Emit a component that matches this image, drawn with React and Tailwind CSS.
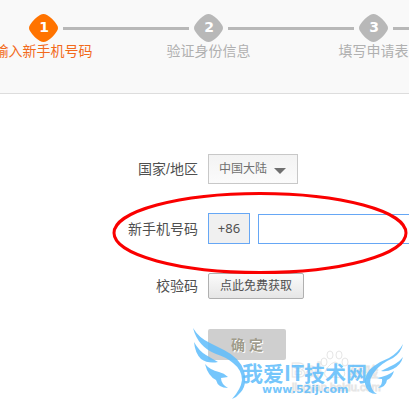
import React, { useState } from "react";

const steps = [
  { id: 1, label: "输入新手机号码" },
  { id: 2, label: "验证身份信息" },
  { id: 3, label: "填写申请表" },
];

const StepMark = ({ number, active }) => (
  <svg
    viewBox="0 0 29 28"
    className={`h-7 w-[29px] shrink-0 ${
      active ? "text-[#ff7300]" : "text-[#b8b8b8]"
    }`}
  >
    <path
      d="M11 1Q14.5-1 18 1Q24 4.500 28 11Q30 14 28 17Q24 23.500 18 27Q14.500 29 11 27Q5 23.500 1 17Q-1 14 1 11Q5 4.500 11 1Z"
      fill="currentColor"
    />
    <text
      x="15"
      y="18"
      textAnchor="middle"
      fill="#fff"
      className="font-['DejaVu_Sans',sans-serif] text-sm font-bold"
    >
      {number}
    </text>
  </svg>
);

const Steps = ({ current }) => (
  <header className="overflow-hidden border-b border-[#dddddd] bg-[#f9f9f9] pt-3.5 pb-8">
    <ol className="-ml-[39px] flex">
      {steps.map(({ id, label }) => (
        <li key={id} className="w-[165px] shrink-0">
          <div className="flex items-center gap-[5px]">
            <span
              className={`h-[3px] flex-1 ${id === 1 ? "" : "bg-[#b8b8b8]"}`}
            />
            <StepMark number={id} active={id === current} />
            <span className="h-[3px] flex-1 bg-[#b8b8b8]" />
          </div>
          <p
            className={`text-center text-sm leading-[19px] ${
              id === current ? "text-[#f26a1b]" : "text-[#b0b0b0]"
            }`}
          >
            {label}
          </p>
        </li>
      ))}
    </ol>
  </header>
);

const Highlight = () => (
  <svg
    viewBox="0 0 296 82"
    className="pointer-events-none absolute top-[192px] left-[112px] h-[82px] w-[296px]"
    fill="none"
  >
    <ellipse
      cx="148"
      cy="41"
      rx="146"
      ry="39.500"
      stroke="#fa0000"
      strokeWidth="3"
    />
  </svg>
);

const Watermark = () => (
  <svg
    viewBox="0 0 219 80"
    className="pointer-events-none absolute top-[324px] left-[190px] h-20 w-[219px]"
  >
    <g fill="#fff" fillOpacity="0.600" stroke="#e6e6e6">
      <ellipse cx="134" cy="38" rx="3" ry="4" />
      <ellipse cx="140" cy="31" rx="3" ry="4" />
      <ellipse cx="149" cy="31" rx="3" ry="4" />
      <ellipse cx="155" cy="38" rx="3" ry="4" />
      <path d="M145 38Q149 39 151 43Q158 50 152 54Q145 52 138 54Q131 51 138 43Q141 39 145 38Z" />
      <text
        x="101"
        y="53"
        className="font-['Liberation_Sans',sans-serif] text-xl font-bold"
      >
        Bai
      </text>
      <text
        x="160"
        y="53"
        className="font-['Noto_Sans_CJK_SC',sans-serif] text-sm"
      >
        经验
      </text>
      <text
        x="102"
        y="67"
        className="font-['Liberation_Sans',sans-serif] text-[11px]"
      >
        jingyan.baidu.com
      </text>
    </g>
    <g fill="#5dbcfb" fillOpacity="0.850">
      <path d="M3 4Q9 14 20 19L34 26Q50 34 54 47Q58 62 49 70Q46 74 42 75Q51 65 52 56Q52 46 43 39Q36 33 26 30Q8 23 3 4Z" />
      <path d="M4 18Q9 27 16 31Q21 34 28 38Q18 40 11 35Q5 29 4 18Z" />
      <path d="M15 40Q20 46 29 48Q34 49 38 53L31 54Q31 60 38 64Q28 64 26 56Q18 52 15 40Z" />
      <path d="M213 20Q211 29 203 34Q192 39 186 46Q178 55 181 62Q182 67 187 70Q177 70 175 60Q174 49 184 42Q191 37 199 34Q208 29 213 20Z" />
      <path d="M213 33Q211 41 203 45Q197 48 191 47Q201 42 205 40Q210 37 213 33Z" />
      <path d="M204 47Q202 54 197 56Q196 63 188 64Q193 60 192 55Q189 55 187 54Q198 52 204 47Z" />
      <text
        x="52"
        y="57"
        className="font-['Noto_Sans_CJK_SC',sans-serif] text-[21px] font-bold"
      >
        我爱IT技术网
      </text>
      <text
        x="72"
        y="69"
        className="font-['DejaVu_Sans',sans-serif] text-[11px] font-bold"
      >
        www.52ij.com
      </text>
    </g>
  </svg>
);

const App = () => {
  const [formData, setFormData] = useState({ region: "cn", phone: "" });

  const handleChange = (e) => {
    const { name, value } = e.target;
    setFormData({ ...formData, [name]: value });
  };

  const handleSubmit = (e) => {
    e.preventDefault();
  };

  return (
    <div className="relative min-h-screen overflow-hidden bg-white font-['Liberation_Sans','Noto_Sans_CJK_SC',sans-serif] text-[#505050]">
      <Steps current={1} />
      <form className="pt-[60px]" onSubmit={handleSubmit}>
        <div className="flex items-center gap-2.5">
          <label htmlFor="region" className="w-[198px] text-right text-sm">
            国家/地区
          </label>
          <div className="relative">
            <select
              id="region"
              name="region"
              value={formData.region}
              onChange={handleChange}
              className="h-[30px] w-[90px] appearance-none border border-[#c8c8c8] bg-linear-to-b from-[#f3f3f3] to-[#fbfbfb] pl-2.5 text-xs text-[#707070]"
            >
              <option value="cn">中国大陆</option>
            </select>
            <svg
              viewBox="0 0 12 6"
              className="pointer-events-none absolute top-3.5 right-3 h-1.5 w-3"
            >
              <path d="M0 0H12L6 6Z" fill="#707070" />
            </svg>
          </div>
        </div>
        <div className="mt-[29px] flex items-center gap-2.5">
          <label htmlFor="phone" className="w-[198px] shrink-0 text-right text-sm">
            新手机号码
          </label>
          <div className="flex flex-1 items-end gap-2">
            <span className="h-[31px] w-[42px] border border-[#66a7f5] bg-[#f0f0f0] text-center font-['Noto_Sans',sans-serif] text-[13px] leading-[29px]">
              +86
            </span>
            <input
              id="phone"
              type="text"
              name="phone"
              value={formData.phone}
              onChange={handleChange}
              className="h-[30px] min-w-[180px] flex-1 border border-[#66a7f5] bg-white px-2 text-sm focus:outline-none"
            />
          </div>
        </div>
        <div className="mt-[29px] flex items-center gap-2.5">
          <label htmlFor="code" className="w-[198px] text-right text-sm">
            校验码
          </label>
          <button
            id="code"
            type="button"
            className="h-[26px] w-24 rounded-xs border border-[#b0b0b0] bg-linear-to-b from-[#fbfbfb] to-[#e6e6e6] text-xs"
          >
            点此免费获取
          </button>
        </div>
        <button
          type="submit"
          className="mt-[30px] ml-[208px] h-[31px] w-[78px] rounded-xs bg-[#cfcfcf] text-sm font-bold text-[#a09c8c] text-shadow-[1px_1px_0_#fff]"
        >
          确 定
        </button>
      </form>
      <Highlight />
      <Watermark />
    </div>
  );
};

export default App;
